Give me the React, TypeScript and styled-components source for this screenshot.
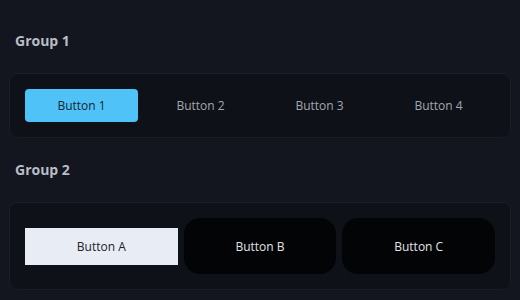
import styled, { createGlobalStyle } from 'styled-components';

const GlobalStyle = createGlobalStyle`
    html, body {
        margin: 0;
        padding: 0;
        background-color: #13161e;
    }
    body {
        font-family: "Open Sans", "Noto Sans", sans-serif;
    }
`;

const Page = styled.div`
    width: 520px;
    height: 300px;
    box-sizing: border-box;
    padding: 31px 9px 0 9px;
    display: flex;
    flex-direction: column;
    gap: 22px;
    background-color: #13161e;
`;

const Section = styled.section`
    display: flex;
    flex-direction: column;
    gap: 22px;
`;

const Label = styled.div`
    padding-left: 6px;
    font-size: 14px;
    line-height: 20px;
    font-weight: 700;
    color: #b9bdc6;
`;

const Card = styled.div`
    box-sizing: border-box;
    padding: 15px;
    border: 1px solid #1b1e26;
    border-radius: 8px;
    background-color: #0e1118;
    display: flex;
    align-items: center;
    gap: 6px;
`;

const TabButton = styled.button<{ $active?: boolean }>`
    flex: 1;
    height: 33px;
    border: none;
    border-radius: 4px;
    font-family: inherit;
    font-size: 12px;
    background-color: ${p => (p.$active ? '#4fc3f7' : 'transparent')};
    color: ${p => (p.$active ? '#1b2433' : '#a3a7af')};
    cursor: pointer;
`;

const BlockButton = styled.button<{ $light?: boolean }>`
    flex: 1;
    height: ${p => (p.$light ? '37px' : '56px')};
    border: none;
    border-radius: ${p => (p.$light ? '0' : '16px')};
    font-family: inherit;
    font-size: 12px;
    background-color: ${p => (p.$light ? '#e8ecf5' : '#030405')};
    color: ${p => (p.$light ? '#1f2229' : '#e1e3e8')};
    cursor: pointer;
`;

const App = () => {
    return (
        <>
            <GlobalStyle />
            <Page>
                <Section>
                    <Label>Group 1</Label>
                    <Card>
                        <TabButton $active>Button 1</TabButton>
                        <TabButton>Button 2</TabButton>
                        <TabButton>Button 3</TabButton>
                        <TabButton>Button 4</TabButton>
                    </Card>
                </Section>
                <Section>
                    <Label>Group 2</Label>
                    <Card>
                        <BlockButton $light>Button A</BlockButton>
                        <BlockButton>Button B</BlockButton>
                        <BlockButton>Button C</BlockButton>
                    </Card>
                </Section>
            </Page>
        </>
    );
};

export default App;
